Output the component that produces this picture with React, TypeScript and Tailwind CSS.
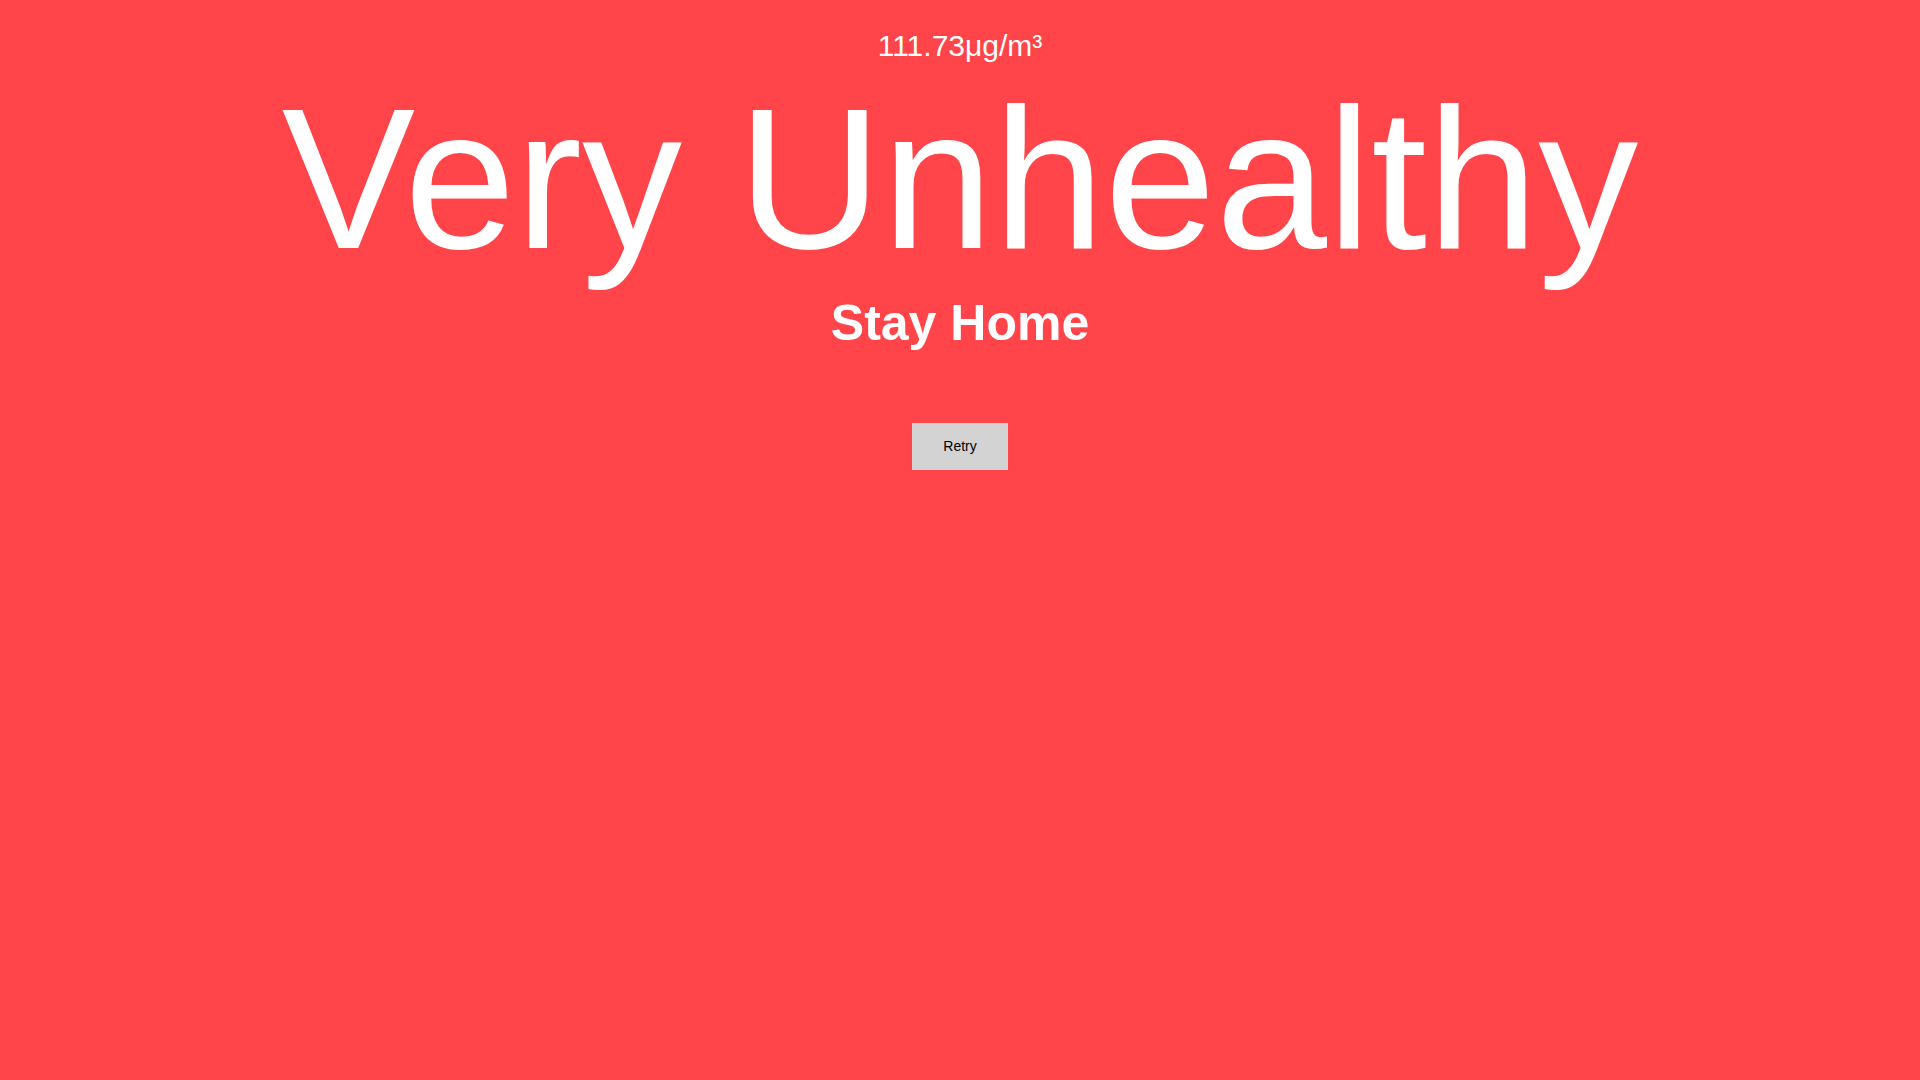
const App = () => {
    return (
        <div className="min-h-screen w-full bg-[#ff444a] text-white font-['Liberation_Sans',Arial,sans-serif] flex flex-col items-center pt-[31px]">
            <p className="text-[30px] leading-none">111.73μg/m³</p>
            <h1 className="mt-[18px] text-[200px] leading-none font-normal whitespace-nowrap">Very Unhealthy</h1>
            <h2 className="mt-[19px] text-[50px] leading-none font-bold">Stay Home</h2>
            <button className="mt-[75px] w-[96px] h-[47px] bg-[#d3d3d3] text-black text-[14px]">Retry</button>
        </div>
    )
}

export default App
